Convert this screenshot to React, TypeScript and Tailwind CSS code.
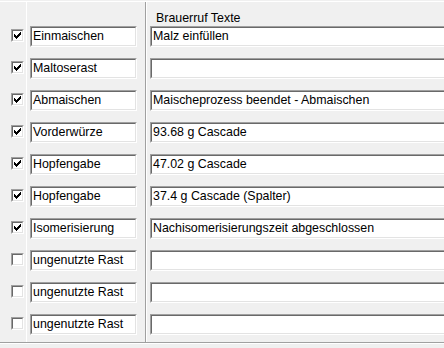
import React from 'react';

const rows = [
  { on: true, name: 'Einmaischen', text: 'Malz einfüllen' },
  { on: true, name: 'Maltoserast', text: '' },
  { on: true, name: 'Abmaischen', text: 'Maischeprozess beendet - Abmaischen' },
  { on: true, name: 'Vorderwürze', text: '93.68 g Cascade' },
  { on: true, name: 'Hopfengabe', text: '47.02 g Cascade' },
  { on: true, name: 'Hopfengabe', text: '37.4 g Cascade (Spalter)' },
  { on: true, name: 'Isomerisierung', text: 'Nachisomerisierungszeit abgeschlossen' },
  { on: false, name: 'ungenutzte Rast', text: '' },
  { on: false, name: 'ungenutzte Rast', text: '' },
  { on: false, name: 'ungenutzte Rast', text: '' },
];

// classic sunken 3D frame, two pixels each side
function Sunken({ className, children }: { className: string; children?: React.ReactNode }) {
  return (
    <div className={`border border-t-[#a0a0a0] border-l-[#a0a0a0] border-b-white border-r-white ${className}`}>
      <div className="h-full w-full border border-t-[#696969] border-l-[#696969] border-b-[#e3e3e3] border-r-[#e3e3e3] bg-white">
        {children}
      </div>
    </div>
  );
}

function Check({ on }: { on: boolean }) {
  return (
    <Sunken className="w-[13px] h-[13px]">
      {on && (
        <svg width="9" height="9" viewBox="0 0 9 9" shapeRendering="crispEdges">
          <path
            d="M7 1h1v1h-1zM6 2h2v1h-2zM1 3h1v1h-1zM5 3h3v1h-3zM1 4h2v1h-2zM4 4h3v1h-3zM1 5h5v1h-5zM2 6h3v1h-3zM3 7h1v1h-1z"
            fill="#000"
          />
        </svg>
      )}
    </Sunken>
  );
}

export default function App() {
  return (
    <div
      className="w-[444px] h-[348px] overflow-hidden bg-[#f0f0f0] pt-px text-[12.4px] text-black"
      style={{ fontFamily: '"Liberation Sans", Arial, sans-serif' }}
    >
      <div className="border-t border-white">
        <div className="grid grid-cols-[26px_1px_118px_1px_1px_1fr] h-[20px]">
          <div />
          <div className="bg-white" />
          <div />
          <div className="bg-[#a0a0a0]" />
          <div className="bg-white" />
          <div className="pl-[9px] pt-[9px] leading-[14px] whitespace-nowrap">Brauerruf Texte</div>
        </div>
        {rows.map((r, i) => (
          <div key={i} className="grid grid-cols-[26px_1px_118px_1px_1px_1fr] h-[32px]">
            <div className="pl-[11px] pt-[7px]">
              <Check on={r.on} />
            </div>
            <div className="bg-white" />
            <div className="pl-[3px] pt-[4px]">
              <Sunken className="w-[107px] h-[21px]">
                <div className="pl-[1px] leading-[17px] whitespace-nowrap">{r.name}</div>
              </Sunken>
            </div>
            <div className="bg-[#a0a0a0]" />
            <div className="bg-white" />
            <div className="pl-[3px] pt-[4px]">
              <Sunken className="w-[310px] h-[21px]">
                <div className="pl-[1px] leading-[17px] whitespace-nowrap">{r.text}</div>
              </Sunken>
            </div>
          </div>
        ))}
        <div className="border-t border-[#a0a0a0]" />
        <div className="border-t border-white" />
      </div>
    </div>
  );
}
